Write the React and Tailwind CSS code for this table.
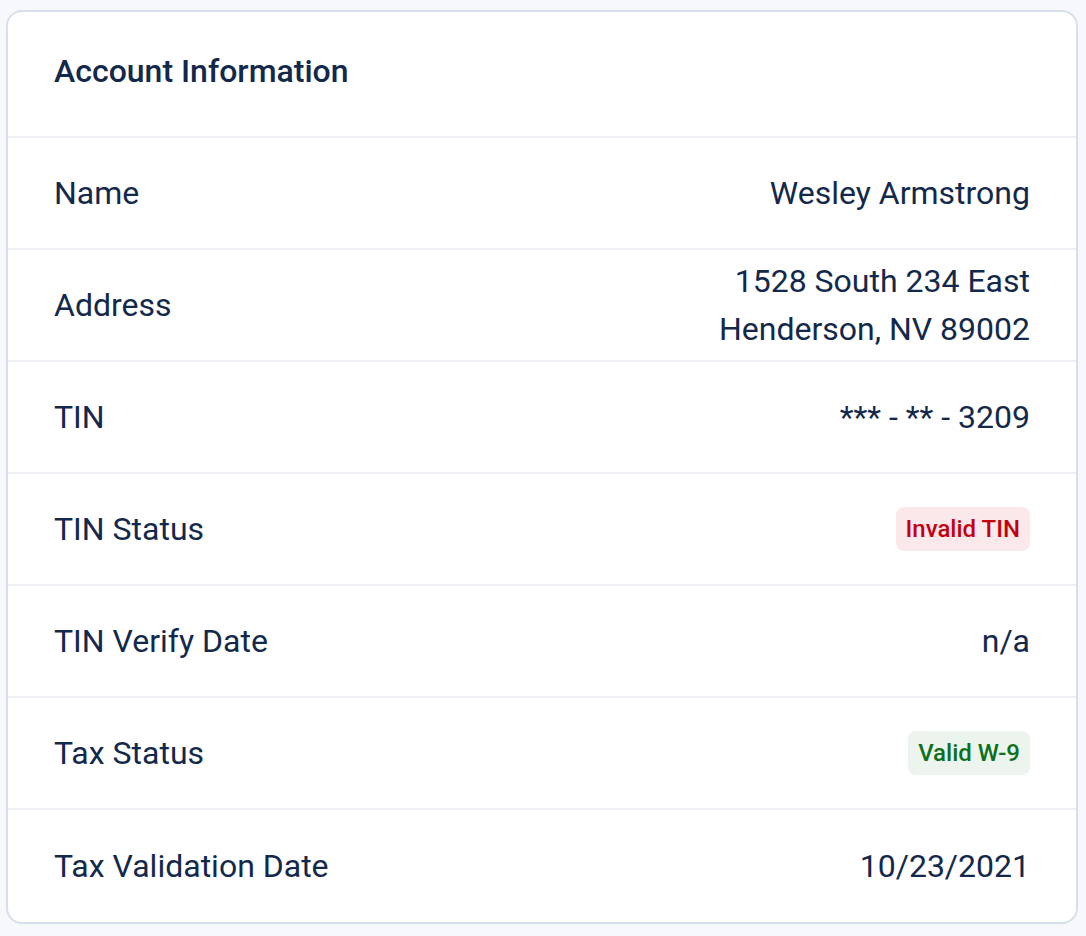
export default function App() {
  const rows = [
    { label: "Name", value: "Wesley Armstrong" },
    { label: "Address", value: ["1528 South 234 East", "Henderson, NV 89002"] },
    { label: "TIN", value: "*** - ** - 3209" },
    { label: "TIN Status", badge: "red", value: "Invalid TIN" },
    { label: "TIN Verify Date", value: "n/a" },
    { label: "Tax Status", badge: "green", value: "Valid W-9" },
    { label: "Tax Validation Date", value: "10/23/2021" },
  ];
  return (
    <div
      className="min-h-[936px] w-[1086px] bg-[#f7f8fb] pt-[10px] pl-[6px] pr-[8px] pb-[10px]"
      style={{ fontFamily: "Roboto, 'Liberation Sans', sans-serif" }}
    >
      <div className="rounded-[16px] border-2 border-[#d6e0ec] bg-white text-[#13294b] overflow-hidden">
        <div className="h-[126px] flex items-center pl-[46px] pr-[46px] pb-[6px] border-b-2 border-[#edf1f6]">
          <h1 className="text-[32px] font-medium leading-[40px]">Account Information</h1>
        </div>
        {rows.map((r, i) => (
          <div
            key={r.label}
            className={
              "h-[112px] flex items-center justify-between pl-[46px] pr-[46px] " +
              (i < rows.length - 1 ? "border-b-2 border-[#edf1f6]" : "")
            }
          >
            <span className="text-[32px] leading-[48px]">{r.label}</span>
            {r.badge === "red" ? (
              <span className="h-[44px] flex items-center rounded-[8px] bg-[#fbe8ea] text-[#c4000f] text-[24px] font-medium px-[10px]">
                {r.value}
              </span>
            ) : r.badge === "green" ? (
              <span className="h-[44px] flex items-center rounded-[8px] bg-[#edf4ee] text-[#0b7020] text-[24px] font-medium px-[10px]">
                {r.value}
              </span>
            ) : Array.isArray(r.value) ? (
              <span className="text-[32px] leading-[48px] text-right">
                {r.value.map((v) => (
                  <div key={v}>{v}</div>
                ))}
              </span>
            ) : (
              <span className="text-[32px] leading-[48px] text-right">{r.value}</span>
            )}
          </div>
        ))}
      </div>
    </div>
  );
}
